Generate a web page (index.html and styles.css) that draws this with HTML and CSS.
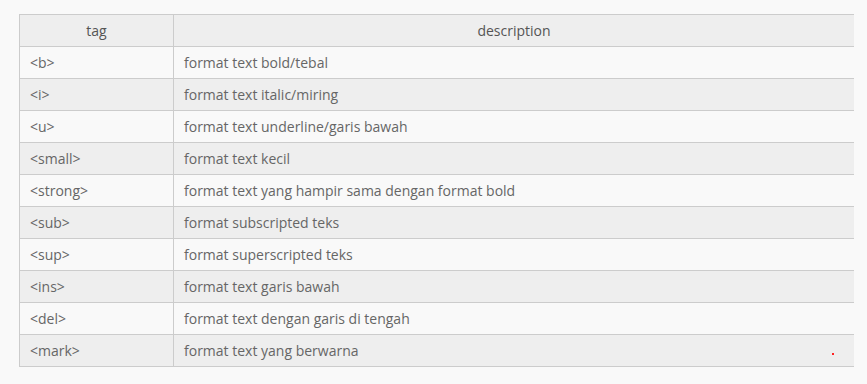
FILE: index.html
```html
<!DOCTYPE html>
<html lang="en">
<head>
  <meta charset="UTF-8" />
  <meta name="viewport" content="width=device-width, initial-scale=1" />
  <title>Tag format teks</title>
  <link rel="stylesheet" href="styles.css">
</head>
<body>

  <div class="content">
    <table class="tags">
      <thead>
        <tr>
          <th class="col-tag">tag</th>
          <th>description</th>
        </tr>
      </thead>
      <tbody>
        <tr><td>&lt;b&gt;</td><td>format text bold/tebal</td></tr>
        <tr><td>&lt;i&gt;</td><td>format text italic/miring</td></tr>
        <tr><td>&lt;u&gt;</td><td>format text underline/garis bawah</td></tr>
        <tr><td>&lt;small&gt;</td><td>format text kecil</td></tr>
        <tr><td>&lt;strong&gt;</td><td>format text yang hampir sama dengan format bold</td></tr>
        <tr><td>&lt;sub&gt;</td><td>format subscripted teks</td></tr>
        <tr><td>&lt;sup&gt;</td><td>format superscripted teks</td></tr>
        <tr><td>&lt;ins&gt;</td><td>format text garis bawah</td></tr>
        <tr><td>&lt;del&gt;</td><td>format text dengan garis di tengah</td></tr>
        <tr><td>&lt;mark&gt;</td><td>format text yang berwarna<span class="dot"></span></td></tr>
      </tbody>
    </table>
  </div>

</body>
</html>
```

FILE: styles.css
```css
/* Page */
body {
  margin: 0;
  background: #f9f9f9;
  font-family: "Open Sans", Arial, sans-serif;
  color: #666;
}

.content {
  padding: 14px 13px 0 19px;
}

/* Tag table */
.tags {
  width: 835px;
  border-collapse: collapse;
  font-size: 14px;
  border-left: 1px solid #ccc;
}

.tags th,
.tags td {
  height: 31px;
  padding: 0 10px;
  border-top: 1px solid #ccc;
  border-bottom: 1px solid #ccc;
  text-align: left;
  line-height: 20px;
}

.tags th {
  font-weight: normal;
  text-align: center;
  color: #555;
  background: #eee;
}

.col-tag {
  width: 133px;
}

.tags td:first-child,
.tags th:first-child {
  border-right: 1px solid #ccc;
}

.tags tbody tr:nth-child(even) td {
  background: #eee;
}

.tags td:last-child {
  position: relative;
}

/* little red mark near the right edge */
.dot {
  position: absolute;
  right: 20px;
  top: 18px;
  width: 2px;
  height: 2px;
  background: #f22;
}
```
